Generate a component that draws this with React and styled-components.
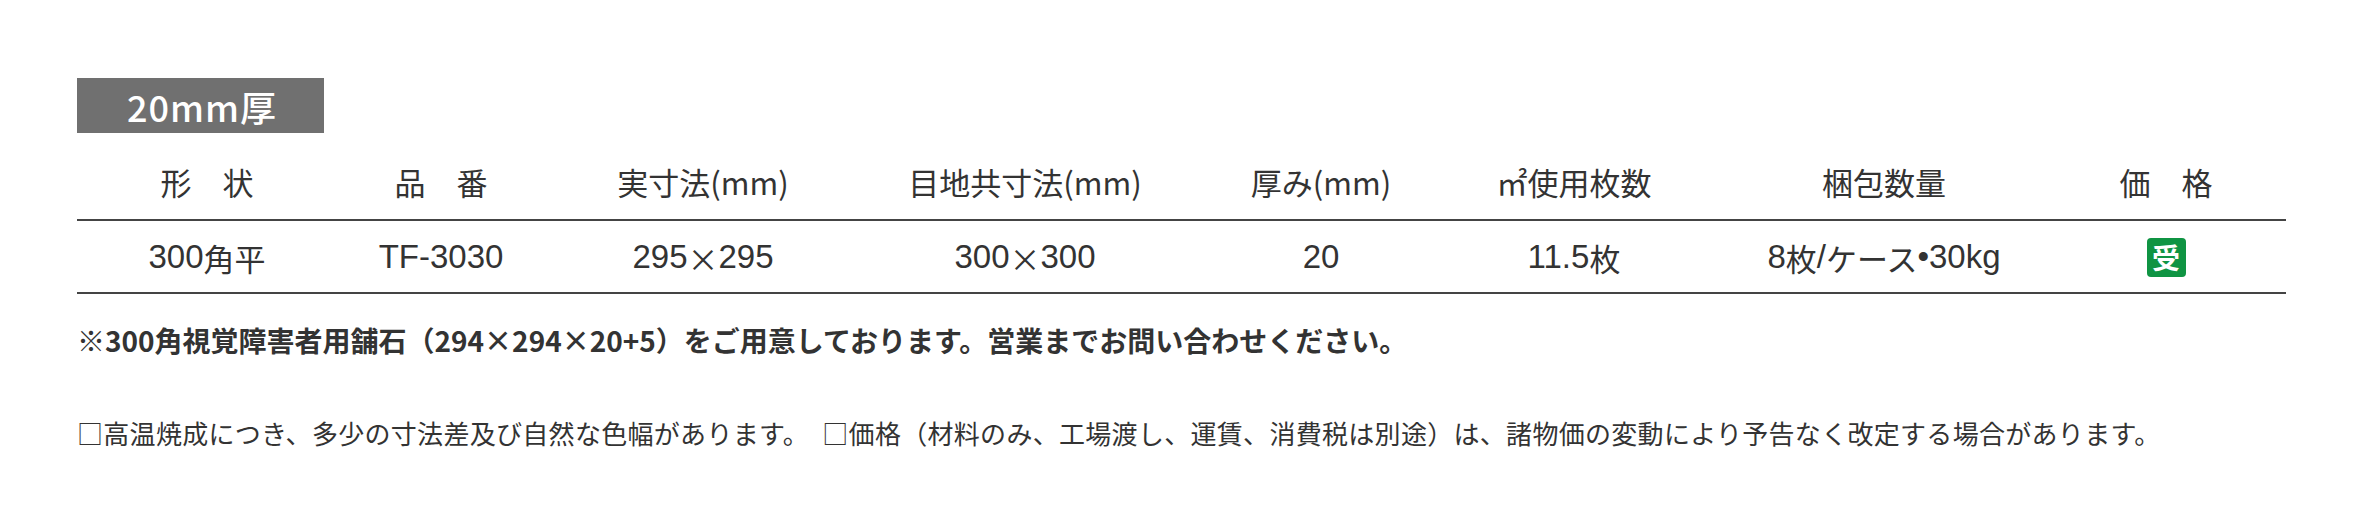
import React from "react";
import styled, { createGlobalStyle } from "styled-components";

const GlobalStyle = createGlobalStyle`
  html, body {
    margin: 0;
    padding: 0;
    background: #ffffff;
  }
  body {
    font-family: "Noto Sans CJK JP", "Noto Sans", sans-serif;
    color: #333333;
  }
`;

const Page = styled.div`
  display: flex;
  flex-direction: column;
  align-items: flex-start;
  padding: 78px 0 0 77px;
  width: 2209px;
`;

const ThicknessTag = styled.div`
  display: flex;
  align-items: center;
  box-sizing: border-box;
  width: 247px;
  height: 55px;
  padding-left: 50px;
  background: #707070;
  color: #ffffff;
  font-family: "Noto Sans CJK JP", sans-serif;
  font-weight: 500;
  font-size: 36px;
  letter-spacing: 1px;
  line-height: 1;
`;

const Table = styled.div`
  display: flex;
  flex-direction: column;
  width: 2209px;
`;

const Row = styled.div`
  display: grid;
  grid-template-columns: 260px 208px 316px 328px 264px 242px 378px 186px;
  align-items: center;
  border-bottom: 2px solid #444444;
  padding: ${(p) => (p.$head ? "31px 0 19px" : "16px 0 15px")};
`;

const HeadCell = styled.div`
  text-align: center;
  font-family: "Noto Sans CJK JP", sans-serif;
  font-size: 31px;
  line-height: 36px;
  color: #333333;
  white-space: nowrap;
`;

const Cell = styled.div`
  display: flex;
  justify-content: center;
  align-items: center;
  height: 40px;
  font-family: "Liberation Sans", "Noto Sans CJK JP", sans-serif;
  font-size: 33px;
  color: #333333;
  white-space: nowrap;
`;

const Wide = styled.span`
  font-family: "Noto Sans CJK JP", sans-serif;
  font-size: 31px;
`;

const OrderBadge = styled.span`
  display: inline-flex;
  align-items: center;
  justify-content: center;
  width: 39px;
  height: 39px;
  border-radius: 4px;
  background: #0f9443;
  color: #ffffff;
  font-family: "Noto Sans CJK JP", sans-serif;
  font-weight: 700;
  font-size: 28px;
  line-height: 1;
`;

const Notes = styled.div`
  display: flex;
  flex-direction: column;
  margin-top: 30px;
  gap: 61px;
`;

const Note = styled.p`
  margin: 0;
  font-family: "Noto Sans CJK JP", sans-serif;
  font-size: ${(p) => (p.$strong ? "28px" : "26px")};
  font-weight: ${(p) => (p.$strong ? 700 : 400)};
  letter-spacing: ${(p) => (p.$strong ? "0" : "0.3px")};
  line-height: 32px;
  color: #333333;
  white-space: nowrap;
`;

const headers = [
  "形　状",
  "品　番",
  "実寸法(mm)",
  "目地共寸法(mm)",
  "厚み(mm)",
  "㎡使用枚数",
  "梱包数量",
  "価　格",
];

export default function App() {
  return (
    <>
      <GlobalStyle />
      <Page>
        <ThicknessTag>20mm厚</ThicknessTag>
        <Table>
          <Row $head>
            {headers.map((h) => (
              <HeadCell key={h}>{h}</HeadCell>
            ))}
          </Row>
          <Row>
            <Cell>300<Wide>角平</Wide></Cell>
            <Cell>TF-3030</Cell>
            <Cell>295<Wide>×</Wide>295</Cell>
            <Cell>300<Wide>×</Wide>300</Cell>
            <Cell>20</Cell>
            <Cell>11.5<Wide>枚</Wide></Cell>
            <Cell>8<Wide>枚</Wide>/<Wide>ケース</Wide>•30kg</Cell>
            <Cell><OrderBadge>受</OrderBadge></Cell>
          </Row>
        </Table>
        <Notes>
          <Note $strong>※300角視覚障害者用舗石（294×294×20+5）をご用意しております。営業までお問い合わせください。</Note>
          <Note>□高温焼成につき、多少の寸法差及び自然な色幅があります。　□価格（材料のみ、工場渡し、運賃、消費税は別途）は、諸物価の変動により予告なく改定する場合があります。</Note>
        </Notes>
      </Page>
    </>
  );
}
